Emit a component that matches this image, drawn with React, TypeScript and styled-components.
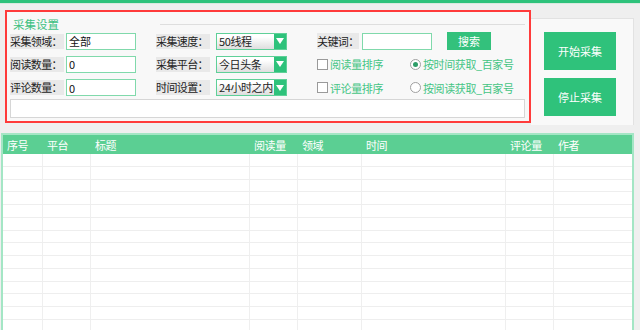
import React from "react";
import styled, { createGlobalStyle } from "styled-components";

const GlobalStyle = createGlobalStyle`
  body {
    margin: 0;
    background: #efefef;
    font-family: "Noto Sans CJK SC", "Microsoft YaHei", sans-serif;
    font-size: 11px;
    color: #222;
  }
`;

const Shell = styled.div`
  width: 640px;
  height: 330px;
  overflow: hidden;
`;

const TopBar = styled.div`
  height: 3px;
  background: #2ec27b;
  border-bottom: 1px solid #d9e9df;
`;

const HeaderArea = styled.div`
  display: flex;
  align-items: flex-start;
  height: 123px;
  box-sizing: border-box;
  padding: 6px 0 0 5px;
`;

const SettingsFrame = styled.div`
  width: 526px;
  height: 113px;
  box-sizing: border-box;
  border: 2px solid #ff3b3b;
  background: #f8f8f8;
  padding: 0 4px 2px 3px;
  display: flex;
  flex-direction: column;
`;

const LegendRow = styled.div`
  display: grid;
  grid-template-columns: 150px 1fr;
  align-items: center;
  height: 19px;
  box-sizing: border-box;
  padding-top: 6px;
`;

const Legend = styled.span`
  padding-left: 3px;
  color: #3cc07f;
  font-size: 11.5px;
  line-height: 13px;
`;

const LegendLine = styled.div`
  border-top: 1px solid #dedede;
`;

const FieldGrid = styled.div`
  display: flex;
  flex-direction: column;
  gap: 6.5px;
  margin-top: 1px;
`;

const FieldRow = styled.div`
  display: grid;
  grid-template-columns: 56px 90px 60px 101px 1fr;
  align-items: center;
  height: 17px;
`;

const FieldLabel = styled.span`
  justify-self: start;
  background: #e9e9e9;
  color: #222;
  letter-spacing: -0.6px;
  line-height: 15px;
  padding-right: 2px;
`;

const TextInput = styled.input<{ $w?: number }>`
  width: ${(p) => p.$w ?? 70}px;
  height: 17px;
  box-sizing: border-box;
  border: 1px solid #80d9ab;
  background: #fff;
  padding: 0 2px;
  font: inherit;
  color: #111;
  outline: none;
`;

const SelectBox = styled.div`
  display: flex;
  width: 71px;
  height: 17px;
  box-sizing: border-box;
  border: 1px solid #5fd098;
`;

const SelectText = styled.div`
  flex: 1;
  background: linear-gradient(#ffffff 20%, #dedede);
  padding-left: 2px;
  line-height: 15px;
  letter-spacing: -0.4px;
  white-space: nowrap;
  overflow: hidden;
`;

const SelectArrow = styled.div`
  width: 12px;
  background: #2ec27b;
  display: flex;
  align-items: center;
  justify-content: center;
`;

const KeywordGroup = styled.div`
  display: flex;
  align-items: center;
`;

const KeywordLabel = styled(FieldLabel)`
  width: 45px;
  box-sizing: border-box;
  background: transparent;
  span {
    background: #e9e9e9;
  }
`;

const SearchButton = styled.button`
  margin-left: 15px;
  width: 44px;
  height: 18px;
  border: none;
  background: #33c17c;
  color: #fff;
  font: inherit;
  padding: 0;
`;

const OptionGroup = styled.div`
  display: grid;
  grid-template-columns: 93px auto;
  align-items: center;
`;

const Option = styled.label`
  display: flex;
  align-items: center;
  gap: 2px;
  color: #45c585;
  letter-spacing: -0.4px;
  white-space: nowrap;
`;

const CheckMark = styled.span`
  width: 11px;
  height: 11px;
  box-sizing: border-box;
  border: 1px solid #9a9a9a;
  background: #fff;
`;

const RadioMark = styled.span<{ $on?: boolean }>`
  width: 11px;
  height: 11px;
  box-sizing: border-box;
  border: 1px solid #a0a0a0;
  border-radius: 50%;
  background: #fff;
  display: flex;
  align-items: center;
  justify-content: center;
  &::after {
    content: "";
    width: 5px;
    height: 5px;
    border-radius: 50%;
    background: ${(p) => (p.$on ? "#2f9d68" : "transparent")};
  }
`;

const LogBox = styled.div`
  margin-top: 3px;
  height: 19px;
  box-sizing: border-box;
  border: 1px solid #d6d6d6;
  background: #fff;
`;

const SidePanel = styled.div`
  margin-top: 8px;
  width: 103px;
  height: 107px;
  box-sizing: border-box;
  border-top: 1px solid #e2e2e2;
  border-right: 1px solid #e2e2e2;
  background: #f9f9f9;
  padding: 13px 0 0 13px;
  display: flex;
  flex-direction: column;
  gap: 8px;
`;

const ActionButton = styled.button`
  width: 72px;
  height: 38px;
  border: none;
  background: #2fc27b;
  color: #fff;
  font: inherit;
  padding: 0;
`;

const Table = styled.div`
  margin: 6px 0 0 1px;
  width: 633px;
  box-sizing: border-box;
  border: 2px solid #a4e6c5;
  border-bottom: none;
  background: #fff;
`;

const cols = "40px 48px 159px 48px 64px 144px 48px 1fr";

const HeadRow = styled.div`
  display: grid;
  grid-template-columns: ${cols};
  height: 19px;
  background: #5bcf93;
  color: #fff;
  align-items: center;
`;

const HeadCell = styled.span`
  padding-left: 4px;
  letter-spacing: -0.4px;
`;

const BodyRow = styled.div`
  display: grid;
  grid-template-columns: ${cols};
  height: 12.75px;
  box-sizing: border-box;
  border-bottom: 1px solid #eeeeee;
`;

const BodyCell = styled.div`
  border-right: 1px solid #efefef;
  &:last-child {
    border-right: none;
  }
`;

const Arrow = () => (
  <svg width="8" height="6" viewBox="0 0 8 6">
    <path d="M0 0 H8 L4 6 Z" fill="#fff" />
  </svg>
);

const Select = ({ value }: { value: string }) => (
  <SelectBox>
    <SelectText>{value}</SelectText>
    <SelectArrow>
      <Arrow />
    </SelectArrow>
  </SelectBox>
);

const headers = ["序号", "平台", "标题", "阅读量", "领域", "时间", "评论量", "作者"];

export default function App() {
  return (
    <Shell>
      <GlobalStyle />
      <TopBar />
      <HeaderArea>
        <SettingsFrame>
          <LegendRow>
            <Legend>采集设置</Legend>
            <LegendLine />
          </LegendRow>
          <FieldGrid>
            <FieldRow>
              <FieldLabel>采集领域：</FieldLabel>
              <TextInput readOnly value="全部" />
              <FieldLabel>采集速度：</FieldLabel>
              <Select value="50线程" />
              <KeywordGroup>
                <KeywordLabel>
                  <span>关键词：</span>
                </KeywordLabel>
                <TextInput readOnly value="" />
                <SearchButton>搜索</SearchButton>
              </KeywordGroup>
            </FieldRow>
            <FieldRow>
              <FieldLabel>阅读数量：</FieldLabel>
              <TextInput readOnly value="0" />
              <FieldLabel>采集平台：</FieldLabel>
              <Select value="今日头条" />
              <OptionGroup>
                <Option>
                  <CheckMark />
                  阅读量排序
                </Option>
                <Option>
                  <RadioMark $on />
                  按时间获取_百家号
                </Option>
              </OptionGroup>
            </FieldRow>
            <FieldRow>
              <FieldLabel>评论数量：</FieldLabel>
              <TextInput readOnly value="0" />
              <FieldLabel>时间设置：</FieldLabel>
              <Select value="24小时之内" />
              <OptionGroup>
                <Option>
                  <CheckMark />
                  评论量排序
                </Option>
                <Option>
                  <RadioMark />
                  按阅读获取_百家号
                </Option>
              </OptionGroup>
            </FieldRow>
          </FieldGrid>
          <LogBox />
        </SettingsFrame>
        <SidePanel>
          <ActionButton>开始采集</ActionButton>
          <ActionButton>停止采集</ActionButton>
        </SidePanel>
      </HeaderArea>
      <Table>
        <HeadRow>
          {headers.map((h) => (
            <HeadCell key={h}>{h}</HeadCell>
          ))}
        </HeadRow>
        {Array.from({ length: 15 }).map((_, r) => (
          <BodyRow key={r}>
            {headers.map((h) => (
              <BodyCell key={h} />
            ))}
          </BodyRow>
        ))}
      </Table>
    </Shell>
  );
}
